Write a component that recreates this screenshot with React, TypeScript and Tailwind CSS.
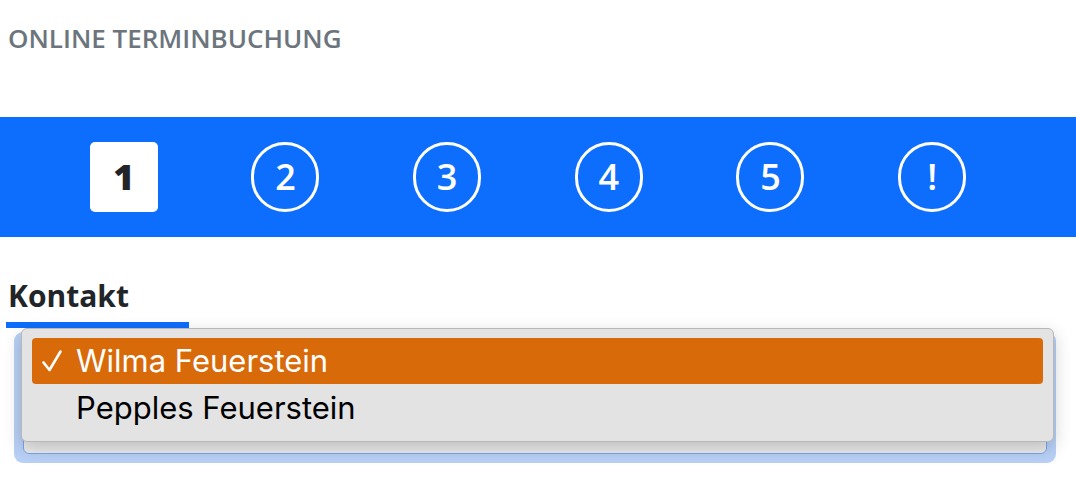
export default function App() {
  const steps = ['2', '3', '4', '5', '!']

  return (
    <div className="relative h-[478px] w-[1076px] overflow-hidden bg-white font-['Open_Sans',sans-serif]">
      <header className="h-[117px] px-2 pt-[19px]">
        <h1 className="text-[26px] font-semibold leading-[38px] text-[#6c757d]">
          ONLINE TERMINBUCHUNG
        </h1>
      </header>

      <nav className="h-[120px] bg-[#0d6efd]">
        <div className="ml-[43px] grid h-full w-[970px] grid-cols-6 items-center justify-items-center">
          <div className="flex h-[70px] w-[68px] items-center justify-center rounded-[5px] bg-white text-[36px] font-extrabold text-[#212529]">
            1
          </div>
          {steps.map((s) => (
            <div
              key={s}
              className="flex h-[70px] w-[68px] items-center justify-center rounded-full border-[3px] border-white text-[36px] font-semibold text-white"
            >
              {s}
            </div>
          ))}
        </div>
      </nav>

      <section className="px-[6px] pt-[39px]">
        <h2 className="inline-block border-b-[6px] border-[#0d6efd] pb-[6px] pl-[2px] pr-[60px] text-[30px] font-bold leading-[40px] text-[#212529]">
          Kontakt
        </h2>
        <div className="ml-[8px] mr-[14px] mt-[4px] h-[131px] rounded-[9px] bg-[#b9d1f7] p-[9px]">
          <div className="h-full w-full rounded-[6px] border border-[#7aa7ef] bg-[#ececec]" />
        </div>
      </section>

      {/* native select popup */}
      <div className="absolute left-[21px] top-[328px] w-[1033px] rounded-[6px] border border-[#b8b8b8] bg-[#e3e3e3] px-[10px] py-[9px] shadow-[0_6px_18px_rgba(0,0,0,0.2)] font-['Inter',sans-serif]">
        <div className="flex h-[46px] items-center rounded-[4px] bg-[#d96a0a] pl-[10px] text-[31px] text-white">
          <svg className="mr-[14px] h-[22px] w-[20px]" viewBox="0 0 20 22" fill="none">
            <path d="M1.5 12.5 L7.5 20 L18.5 1.5" stroke="white" strokeWidth="2.6" strokeLinecap="round" strokeLinejoin="round" />
          </svg>
          <span>Wilma Feuerstein</span>
        </div>
        <div className="flex h-[48px] items-center pl-[44px] text-[31px] text-black">
          Pepples Feuerstein
        </div>
      </div>
    </div>
  )
}
